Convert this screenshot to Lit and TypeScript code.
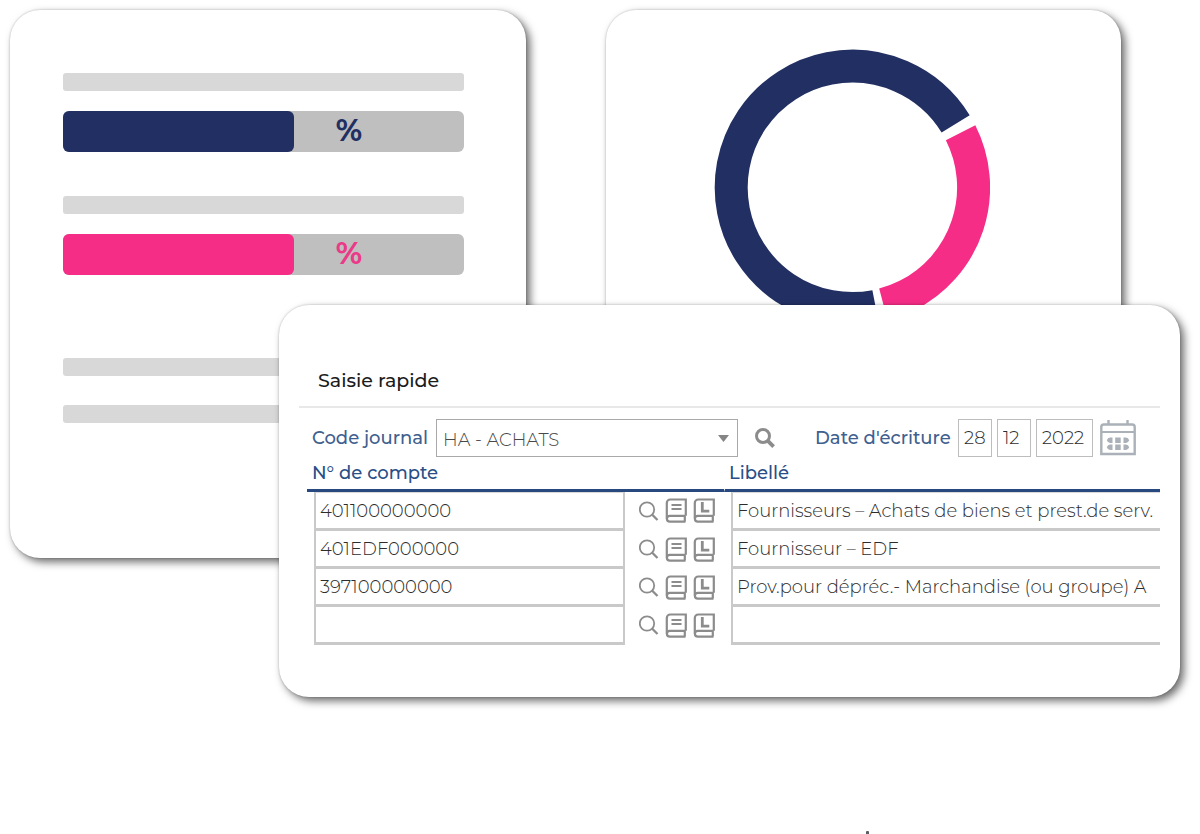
import { LitElement, html, css, svg } from "lit";
import { customElement, property } from "lit/decorators.js";

const NAVY = "#222f62";
const PINK = "#f62d87";

interface Row {
  account: string;
  label: string;
}

const ROWS: Row[] = [
  { account: "401100000000", label: "Fournisseurs – Achats de biens et prest.de serv." },
  { account: "401EDF000000", label: "Fournisseur – EDF" },
  { account: "397100000000", label: "Prov.pour dépréc.- Marchandise (ou groupe) A" },
  { account: "", label: "" },
];

const bookShape = svg`
  <path d="M20.5 17.8H4.800a2.900 2.900 0 0 0 0 5.800h15.700M19.800 17.500v6" />
  <path d="M1.800 20.500V5a3.500 3.500 0 0 1 3.500-3.500h15.500v16.300" />
`;

const searchIcon = html`<svg class="icon" width="20" height="20" viewBox="0 0 20 20" aria-hidden="true">
  <circle cx="8" cy="8.5" r="7.2" stroke-width="1.8" />
  <path d="M13 13.5l5.500 5.500" stroke-width="2.3" />
</svg>`;

const searchBoldIcon = html`<svg class="icon" width="20" height="20" viewBox="0 0 20 20" aria-hidden="true">
  <circle cx="8" cy="8" r="6.5" stroke-width="3" />
  <path d="M12.6 12.6l6 6" stroke-width="3.8" />
</svg>`;

const bookIcon = html`<svg class="icon" width="22" height="25" viewBox="0 0 22 25" stroke-width="2.200" aria-hidden="true">
  ${bookShape}
  <path d="M6.500 7h10M6.500 11h10" stroke-width="1.900" />
</svg>`;

const ledgerIcon = html`<svg class="icon" width="22" height="25" viewBox="0 0 22 25" stroke-width="2.200" aria-hidden="true">
  ${bookShape}
  <path d="M9.300 4v9.200h7" stroke-width="2.800" />
</svg>`;

const calendarIcon = html`<svg class="calendar" width="36" height="36" viewBox="0 0 36 36" aria-hidden="true">
  <path d="M8.500 0v5M27.500 0v5" stroke-width="2.400" />
  <path d="M1.300 34V7q0-2.500 2.500-2.500h28.400q2.500 0 2.500 2.500v27z" stroke-width="2.400" />
  <path d="M1 12h34" stroke-width="2.200" />
  <g class="dots">
    <path d="M12.500 17.500v5.500h-2.500q-2.200 0-3.200-2.700 1-2.800 3.200-2.800zM12.500 24.500v5.500h-2.500q-2.200 0-3.200-2.700 1-2.800 3.200-2.800z" />
    <path d="M15.200 17.500h5.500v5.500h-5.500zM15.200 24.500h5.500v5.500h-5.500z" />
    <path d="M23.500 17.500v5.500h2.500q2.200 0 3.200-2.700-1-2.800-3.200-2.800zM23.500 24.500v5.500h2.500q2.200 0 3.200-2.700-1-2.800-3.200-2.800z" />
  </g>
</svg>`;

@customElement("progress-card")
export class ProgressCard extends LitElement {
  static styles = css`
    :host {
      display: flex;
      flex-direction: column;
      box-sizing: border-box;
      padding: 63px 62px 135px 53px;
    }
    .line {
      height: 18px;
      border-radius: 3px;
      background: #d8d8d8;
    }
    .track {
      display: flex;
      height: 41px;
      margin: 20px 0 44px;
      border-radius: 6px;
      background: #bfbfbf;
    }
    .fill {
      border-radius: 6px;
    }
    .fill.navy {
      background: #222f62;
    }
    .fill.pink {
      background: #f62d87;
    }
    .percent {
      margin-left: 42px;
      font-size: 30px;
      font-weight: 700;
      line-height: 39px;
    }
    .percent.navy {
      color: #222f62;
    }
    .percent.pink {
      color: #ea3a88;
    }
    .spaced {
      margin-top: 39px;
    }
    .tail {
      margin-top: 29px;
    }
  `;

  private bar(tone: string, share: number) {
    return html`
      <div class="line"></div>
      <div class="track">
        <div class="fill ${tone}" style="width: ${share}%"></div>
        <span class="percent ${tone}">%</span>
      </div>
    `;
  }

  render() {
    return html`
      ${this.bar("navy", 57.6)} ${this.bar("pink", 57.6)}
      <div class="line spaced"></div>
      <div class="line tail"></div>
    `;
  }
}

@customElement("donut-card")
export class DonutCard extends LitElement {
  static styles = css`
    :host {
      display: flex;
      justify-content: center;
      box-sizing: border-box;
      padding: 39px 22px 80px 0;
    }
    .ring {
      fill: none;
      stroke-width: 33px;
    }
  `;

  render() {
    return html`<svg width="276" height="276" viewBox="-138.4 -138.4 276 276" role="img" aria-label="Répartition">
      <circle class="ring" r="121.2" pathLength="360" stroke=${NAVY} stroke-dasharray="249.4 360" transform="rotate(79)" />
      <circle class="ring" r="121.2" pathLength="360" stroke=${PINK} stroke-dasharray="102 360" transform="rotate(-26.8)" />
    </svg>`;
  }
}

@customElement("quick-entry")
export class QuickEntry extends LitElement {
  @property({ attribute: false }) rows: Row[] = [];

  static styles = css`
    :host {
      display: block;
      box-sizing: border-box;
      padding: 61px 20px 52px;
    }
    .title {
      margin: 0;
      padding: 0 19px 10px;
      border-bottom: 2px solid #e8e8e8;
      font-size: 19px;
      font-weight: 500;
      line-height: 30px;
      color: #1c1c1c;
    }
    .form {
      display: flex;
      align-items: center;
      padding: 11px 24px 0 13px;
    }
    .label {
      flex: none;
      font-size: 18px;
      font-weight: 500;
      color: #40608f;
      white-space: nowrap;
    }
    .label.journal {
      width: 124px;
    }
    .label.date {
      width: 143px;
      margin-left: 40px;
    }
    .picker {
      display: grid;
      flex: 1;
      align-items: center;
      justify-items: end;
      margin-right: 17px;
    }
    .picker > * {
      grid-area: 1 / 1;
    }
    .arrow {
      margin-right: 9px;
      fill: #858585;
      pointer-events: none;
    }
    select,
    input {
      box-sizing: border-box;
      width: 100%;
      height: 38px;
      margin: 0;
      border: 1px solid #bdbdbd;
      border-radius: 0;
      background: #fff;
      font: inherit;
      font-size: 18px;
      font-weight: 300;
      color: #2c2c2c;
      outline: none;
    }
    select {
      appearance: none;
      padding: 3px 6px 0;
      border-color: #a9a9a9;
      color: #484848;
    }
    button {
      display: flex;
      flex: none;
      padding: 0;
      border: 0;
      background: none;
      cursor: pointer;
    }
    .dates {
      display: flex;
      gap: 5px;
      margin-right: 7px;
    }
    .dates input {
      width: 34px;
      padding: 0 0 0 5px;
    }
    .dates .year {
      width: 57px;
    }
    .icon {
      fill: none;
      stroke: #8c8c8c;
    }
    .calendar {
      fill: none;
      stroke: #abb1b8;
    }
    .dots {
      fill: #abb1b8;
      stroke: none;
    }
    .entries {
      width: calc(100% - 8px);
      margin-left: 8px;
      border-spacing: 0;
      table-layout: fixed;
    }
    .col-account {
      width: 318px;
    }
    .col-tools {
      width: 99px;
    }
    th {
      height: 32px;
      padding: 0 0 0 5px;
      border-bottom: 3px solid #27497f;
      font-size: 18px;
      font-weight: 500;
      line-height: 32px;
      text-align: left;
      color: #2a4f87;
    }
    th + th {
      padding-left: 4px;
      border-left: 1px solid #fff;
    }
    td {
      padding: 0 0 0 7px;
    }
    td.tools {
      padding-left: 14px;
    }
    td input {
      display: block;
      padding: 0 0 0 4px;
      border-width: 0 2px 3px;
      border-color: #c9c9c9;
    }
    tbody tr:first-child input {
      height: 39px;
      border-top: 1px solid #d8d8d8;
    }
    td .wide {
      border-right-width: 0;
    }
    .actions {
      display: flex;
      align-items: center;
      gap: 6px;
      padding-bottom: 2px;
    }
  `;

  render() {
    return html`
      <h2 class="title">Saisie rapide</h2>
      <div class="form">
        <label class="label journal" for="journal">Code journal</label>
        <div class="picker">
          <select id="journal">
            <option>HA - ACHATS</option>
          </select>
          <svg class="arrow" width="11" height="7" viewBox="0 0 11 7" aria-hidden="true"><path d="M0 0h11L5.500 7z" /></svg>
        </div>
        <button type="button" aria-label="Rechercher un journal">${searchBoldIcon}</button>
        <label class="label date" for="day">Date d'écriture</label>
        <div class="dates">
          <input id="day" aria-label="Jour" .value=${"28"} />
          <input aria-label="Mois" .value=${"12"} />
          <input class="year" aria-label="Année" .value=${"2022"} />
        </div>
        <button type="button" aria-label="Calendrier">${calendarIcon}</button>
      </div>
      <table class="entries">
        <colgroup>
          <col class="col-account" />
          <col class="col-tools" />
          <col />
        </colgroup>
        <thead>
          <tr>
            <th colspan="2" scope="col">N° de compte</th>
            <th scope="col">Libellé</th>
          </tr>
        </thead>
        <tbody>
          ${this.rows.map(
            (row) => html`<tr>
              <td><input aria-label="N° de compte" .value=${row.account} /></td>
              <td class="tools">
                <div class="actions">
                  <button type="button" aria-label="Rechercher">${searchIcon}</button>
                  <button type="button" aria-label="Journal">${bookIcon}</button>
                  <button type="button" aria-label="Grand livre">${ledgerIcon}</button>
                </div>
              </td>
              <td><input class="wide" aria-label="Libellé" .value=${row.label} /></td>
            </tr>`
          )}
        </tbody>
      </table>
    `;
  }
}

@customElement("app-root")
export class AppRoot extends LitElement {
  static styles = css`
    :host {
      display: flex;
      flex-direction: column;
      box-sizing: border-box;
      min-height: 100vh;
      background: #fff;
      font-family: Montserrat, Inter, "Open Sans", sans-serif;
    }
    .cards {
      display: grid;
      grid-template-columns: 1fr 1fr;
      align-items: start;
      gap: 80px;
      padding: 10px 79px 0 10px;
    }
    .card {
      border-radius: 30px;
      background: #fff;
      box-shadow: 4px 4px 9px rgba(0, 0, 0, 0.58), 0 0 2px rgba(0, 0, 0, 0.25);
    }
    .front {
      position: relative;
      margin: -253px 20px 0 279px;
    }
    .dot {
      width: 3px;
      height: 3px;
      margin: auto 0 0 866px;
      border-radius: 1px 1px 0 0;
      background: #5b6067;
    }
  `;

  render() {
    return html`
      <div class="cards">
        <progress-card class="card"></progress-card>
        <donut-card class="card"></donut-card>
      </div>
      <quick-entry class="card front" .rows=${ROWS}></quick-entry>
      <div class="dot"></div>
    `;
  }
}
